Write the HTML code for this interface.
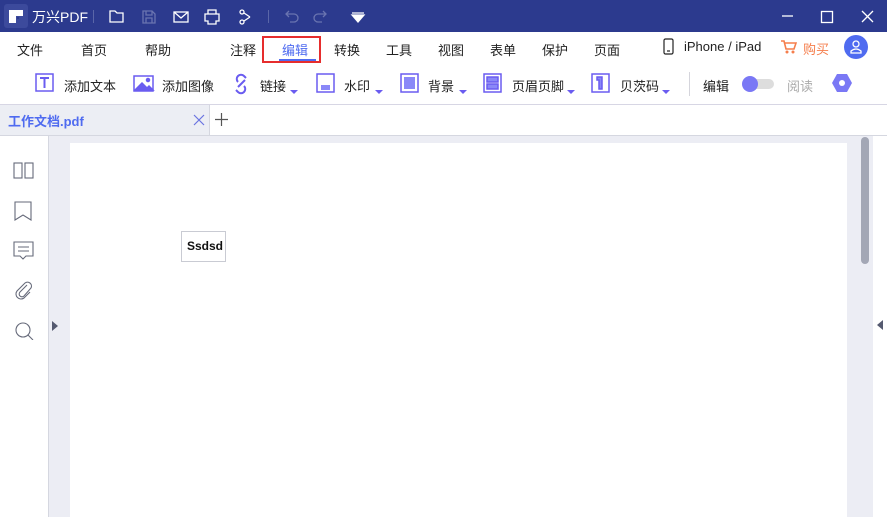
<!DOCTYPE html>
<html><head><meta charset="utf-8"><style>
*{margin:0;padding:0;box-sizing:border-box}
body{width:887px;height:517px;overflow:hidden;position:relative;background:#fff;font-family:"Liberation Sans","Noto Sans CJK SC",sans-serif;font-size:13px;color:#222}
.a{position:absolute}
.t{position:absolute;white-space:nowrap}
svg{position:absolute}
</style></head><body>
<div class="a" style="left:0;top:0;width:887px;height:32px;background:#2c3a8e"></div>
<div class="a" style="left:4px;top:4px;width:24px;height:24px;background:#3c4a9c;border-radius:3px"></div>
<svg style="left:9px;top:10px" width="14" height="13"><path d="M0 0H14V6H7V13H0Z" fill="#fff"/><rect x="8" y="7" width="2" height="2" fill="#2c3a8e"/></svg>
<div class="t" style="left:32px;top:7px;color:#fff;font-size:14px">万兴PDF</div>
<div class="a" style="left:93px;top:10px;width:1px;height:13px;background:#5a66a8"></div>
<svg style="left:108px;top:8px" width="150" height="18" fill="none" stroke="#fff" stroke-width="1.3">
<path d="M2 3H7L9 5H15V14H2Z"/>
<path d="M35 3H44L47 6V15H35Z M38 3V7H44V3 M38 15V10H44V15" stroke="#6a74b0"/>
<rect x="66" y="4" width="14" height="10"/><path d="M66 4L73 10L80 4"/>
<path d="M100 6V2H108V6 M97 6H111V13H108V16H100V13H97Z"/>
<circle cx="134" cy="4" r="2"/><circle cx="134" cy="14" r="2"/><path d="M136 5L142 9M136 13L142 9"/>
</svg>
<div class="a" style="left:268px;top:10px;width:1px;height:13px;background:#5a66a8"></div>
<svg style="left:285px;top:8px" width="90" height="18" fill="none" stroke="#6a74b0" stroke-width="1.3">
<path d="M4 3L1 6L4 9M1 6H9A4 4 0 0 1 9 14H5"/>
<path d="M38 3L41 6L38 9M41 6H33A4 4 0 0 0 33 14H37"/>
<path d="M67 5H79M67 7L73 14L79 7Z" fill="#fff" stroke="#fff"/>
</svg>
<svg style="left:780px;top:8px" width="100" height="18" stroke="#fff" stroke-width="1.3" fill="none">
<path d="M2 8H13"/><rect x="41.5" y="3.5" width="11" height="11"/><path d="M82 3L93 14M93 3L82 14"/>
</svg>
<!-- menu -->
<div class="t" style="left:17px;top:40px">文件</div>
<div class="t" style="left:81px;top:40px">首页</div>
<div class="t" style="left:145px;top:40px">帮助</div>
<div class="t" style="left:230px;top:40px">注释</div>
<div class="t" style="left:282px;top:40px;color:#4f6bf0">编辑</div>
<div class="a" style="left:279px;top:59px;width:37px;height:2px;background:#4f6bf0"></div>
<div class="a" style="left:262px;top:36px;width:59px;height:27px;border:2px solid #e62d2d"></div>
<div class="t" style="left:334px;top:40px">转换</div>
<div class="t" style="left:386px;top:40px">工具</div>
<div class="t" style="left:438px;top:40px">视图</div>
<div class="t" style="left:490px;top:40px">表单</div>
<div class="t" style="left:542px;top:40px">保护</div>
<div class="t" style="left:594px;top:40px">页面</div>
<svg style="left:663px;top:38px" width="12" height="18" fill="none" stroke="#222" stroke-width="1.2"><rect x="1" y="1" width="9" height="15" rx="1.5"/><path d="M4 13H7"/></svg>
<div class="t" style="left:684px;top:39px">iPhone / iPad</div>
<svg style="left:781px;top:40px" width="16" height="14" fill="#f57e4c"><path d="M0 1H3L5 9H13L15 3H4" stroke="#f57e4c" stroke-width="1.6" fill="none"/><circle cx="6" cy="12" r="1.5"/><circle cx="12" cy="12" r="1.5"/></svg>
<div class="t" style="left:803px;top:39px;color:#f57e4c">购买</div>
<div class="a" style="left:844px;top:35px;width:24px;height:24px;border-radius:50%;background:#4f6bf0"></div>
<svg style="left:850px;top:40px" width="12" height="14" fill="none" stroke="#fff" stroke-width="1.3"><circle cx="6" cy="4" r="3"/><path d="M1 13V11Q6 7 11 11V13Z"/></svg>
<!-- toolbar -->
<svg style="left:35px;top:72px" width="640" height="26" fill="none" stroke="#6a5cf0" stroke-width="1.5">
<rect x="1" y="2" width="17" height="17"/><path d="M5 6H14M9.5 6V16" stroke-width="2"/>
<rect x="99" y="4" width="19" height="15"/><path d="M100 18L107 11L112 16L114 14L118 18Z" fill="#6a5cf0"/><circle cx="113" cy="8" r="1.5" fill="#6a5cf0"/>
<path d="M203 10A4 4 0 0 1 209 4L211 6M209 14A4 4 0 0 1 203 20L201 18M203 15L210 8" stroke-width="2"/>
<rect x="282" y="2" width="17" height="18"/><rect x="286" y="13" width="9" height="5" fill="#8a88f8" stroke="none"/>
<rect x="366" y="2" width="17" height="18"/><rect x="369" y="5" width="11" height="12" fill="#8a88f8" stroke="none"/>
<rect x="449" y="2" width="17" height="18"/><rect x="452" y="5" width="11" height="5" fill="#8a88f8"/><rect x="452" y="12" width="11" height="5" fill="#8a88f8"/>
<rect x="557" y="2" width="17" height="18"/><path d="M562 5H567V17H564V8H562Z" fill="#8a88f8"/>
</svg>
<div class="t" style="left:64px;top:76px">添加文本</div>
<div class="t" style="left:162px;top:76px">添加图像</div>
<div class="t" style="left:260px;top:76px">链接</div>
<div class="t" style="left:344px;top:76px">水印</div>
<div class="t" style="left:428px;top:76px">背景</div>
<div class="t" style="left:512px;top:76px">页眉页脚</div>
<div class="t" style="left:620px;top:76px">贝茨码</div>
<svg style="left:290px;top:88px" width="380" height="8" fill="#6a5cf0">
<path d="M0 2H8L4 6Z"/><path d="M85 2H93L89 6Z"/><path d="M169 2H177L173 6Z"/><path d="M277 2H285L281 6Z"/><path d="M372 2H380L376 6Z"/>
</svg>
<div class="a" style="left:689px;top:72px;width:1px;height:24px;background:#d5d5dc"></div>
<div class="t" style="left:703px;top:76px">编辑</div>
<div class="a" style="left:745px;top:79px;width:29px;height:10px;border-radius:5px;background:#ddd"></div>
<div class="a" style="left:742px;top:76px;width:16px;height:16px;border-radius:50%;background:#7a78f5"></div>
<div class="t" style="left:787px;top:76px;color:#aaa">阅读</div>
<svg style="left:831px;top:73px" width="22" height="20"><path d="M6 1H16L21 10L16 19H6L1 10Z" fill="#7a78f5"/><circle cx="11" cy="10" r="3" fill="#fff"/></svg>
<div class="a" style="left:0;top:104px;width:887px;height:1px;background:#d7d6e4"></div>
<!-- tab bar -->
<div class="a" style="left:0;top:105px;width:210px;height:30px;background:#eceef4"></div>
<div class="a" style="left:209px;top:105px;width:1px;height:30px;background:#d5d7e0"></div>
<div class="t" style="left:8px;top:111px;color:#4f6bf0;font-weight:bold;font-size:13px">工作文档.pdf</div>
<svg style="left:193px;top:114px" width="12" height="12" stroke="#6a74e0" stroke-width="1.2"><path d="M1 1L11 11M11 1L1 11"/></svg>
<svg style="left:215px;top:113px" width="13" height="13" stroke="#555" stroke-width="1.2"><path d="M6.5 0V13M0 6.5H13"/></svg>
<div class="a" style="left:0;top:135px;width:887px;height:1px;background:#d5d7e0"></div>
<!-- content -->
<div class="a" style="left:48px;top:136px;width:1px;height:381px;background:#d5d7e0"></div>
<div class="a" style="left:49px;top:136px;width:824px;height:381px;background:#ecedf4"></div>
<div class="a" style="left:70px;top:143px;width:777px;height:374px;background:#fff"></div>
<div class="a" style="left:861px;top:137px;width:8px;height:127px;border-radius:4px;background:#a3a7b5"></div>
<div class="a" style="left:873px;top:136px;width:14px;height:381px;background:#fff"></div>
<svg style="left:877px;top:320px" width="8" height="10" fill="#555a70"><path d="M6 0V10L0 5Z"/></svg>
<svg style="left:52px;top:321px" width="6" height="10" fill="#555a70"><path d="M0 0V10L6 5Z"/></svg>
<div class="a" style="left:181px;top:231px;width:45px;height:31px;border:1px solid #c9cbd3;background:#fff"></div>
<div class="t" style="left:187px;top:239px;font-size:12px;color:#111;font-weight:bold">Ssdsd</div>
<svg style="left:13px;top:160px" width="24" height="180" fill="none" stroke="#666a7a" stroke-width="1.1">
<rect x="1" y="3" width="8" height="15"/><rect x="12" y="3" width="8" height="15"/>
<path d="M2 42V60L10 55L18 60V42Z"/>
<path d="M1 82H20V96H13L10 99L7 96H1Z M5 87H16M5 91H16"/>
<path d="M14 125L7 132A2.5 2.5 0 0 0 11 136L18 128A4 4 0 0 0 12 123L4 131A5 5 0 0 0 11 138L17 132"/>
<circle cx="10" cy="170" r="7"/><path d="M15 175L20 180"/>
</svg>
</body></html>
